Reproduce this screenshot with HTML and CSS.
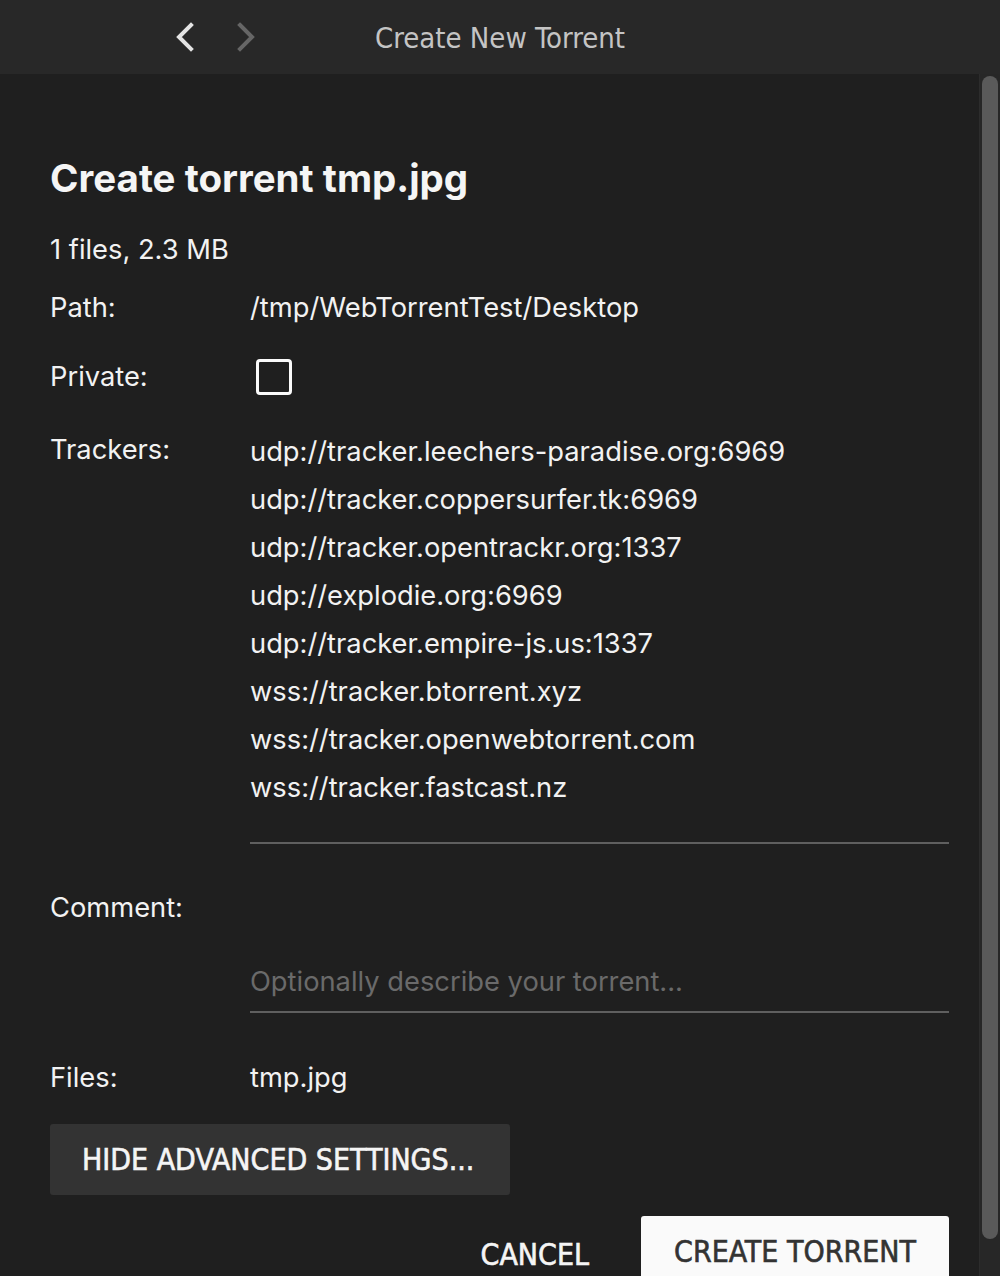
FILE: index.html
```html
<!DOCTYPE html>
<html>
<head>
<meta charset="utf-8">
<title>Create New Torrent</title>
<link rel="stylesheet" href="styles.css">
</head>
<body>
<header class="topbar">
  <nav class="nav">
    <svg class="chev chev-back" width="22" height="30" viewBox="0 0 22 30"><path d="M17 3 L5 15 L17 27" fill="none" stroke="currentColor" stroke-width="4" stroke-linecap="square"/></svg>
    <svg class="chev chev-fwd" width="22" height="30" viewBox="0 0 22 30"><path d="M5 3 L17 15 L5 27" fill="none" stroke="currentColor" stroke-width="4" stroke-linecap="square"/></svg>
  </nav>
  <div class="title">Create New Torrent</div>
  <div></div>
</header>
<main class="main">
  <section class="content">
    <h1 class="heading">Create torrent tmp.jpg</h1>
    <div class="summary">1 files, 2.3 MB</div>
    <div class="row row-path">
      <div class="label">Path:</div>
      <div class="value">/tmp/WebTorrentTest/Desktop</div>
    </div>
    <div class="row row-private">
      <div class="label">Private:</div>
      <div class="value"><span class="checkbox"></span></div>
    </div>
    <div class="row row-trackers">
      <div class="label">Trackers:</div>
      <div class="value trackers">
        <div>udp://tracker.leechers-paradise.org:6969</div>
        <div>udp://tracker.coppersurfer.tk:6969</div>
        <div>udp://tracker.opentrackr.org:1337</div>
        <div>udp://explodie.org:6969</div>
        <div>udp://tracker.empire-js.us:1337</div>
        <div>wss://tracker.btorrent.xyz</div>
        <div>wss://tracker.openwebtorrent.com</div>
        <div>wss://tracker.fastcast.nz</div>
      </div>
    </div>
    <div class="row row-comment">
      <div class="label">Comment:</div>
      <div class="value comment"><span class="placeholder">Optionally describe your torrent...</span></div>
    </div>
    <div class="row row-files">
      <div class="label">Files:</div>
      <div class="value">tmp.jpg</div>
    </div>
    <button class="btn btn-advanced">HIDE ADVANCED SETTINGS...</button>
    <div class="actions">
      <button class="btn btn-cancel">CANCEL</button>
      <button class="btn btn-create">CREATE TORRENT</button>
    </div>
  </section>
  <div class="scrollbar"><div class="thumb"></div></div>
</main>
</body>
</html>
```
FILE: styles.css
```css
html, body {
  margin: 0;
  padding: 0;
  background: #1f1f1f;
  height: 1276px;
  overflow: hidden;
}
body {
  font-family: "Inter", "Noto Sans", sans-serif;
  color: #f2f2f2;
}
.topbar {
  height: 74px;
  background: #282828;
  display: grid;
  grid-template-columns: 1fr auto 1fr;
  align-items: center;
}
.nav {
  display: flex;
  align-items: center;
  gap: 39px;
  padding-left: 174px;
}
.chev { display: block; }
.chev-back { color: #e4e4e4; }
.chev-fwd { color: #666; }
.title {
  font-family: "Liberation Sans Narrow", "DejaVu Sans Condensed", sans-serif;
  font-size: 29px;
  color: #c4c4c4;
  padding-top: 2px;
}
.main {
  display: flex;
  height: 1202px;
  overflow: hidden;
}
.content {
  flex: 1;
  padding: 80px 30px 0 50px;
}
.scrollbar {
  width: 16px;
  padding: 2px 2px 0 2px;
  background: #272727;
  border-left: 1px solid #2c2c2c;
}
.thumb {
  height: 1163px;
  background: #5a5a5a;
  border-radius: 8px;
}
.heading {
  margin: 0;
  font-size: 38.5px;
  line-height: 48px;
  font-weight: 700;
  color: #f5f5f5;
}
.summary {
  margin-top: 28px;
  font-size: 27.3px;
  line-height: 40px;
}
.row {
  display: flex;
  font-size: 27.3px;
}
.label {
  width: 200px;
  flex: none;
  line-height: 40px;
}
.value {
  flex: 1;
  line-height: 40px;
}
.row-path { margin-top: 18px; }
.row-private {
  margin-top: 25px;
  height: 48px;
  align-items: center;
}
.checkbox {
  display: block;
  width: 30px;
  height: 30px;
  margin-left: 6px;
  border: 3px solid #fafafa;
  border-radius: 4px;
}
.row-trackers { margin-top: 27px; }
.row-trackers .label { line-height: 44px; }
.trackers {
  line-height: 48px;
  padding-bottom: 30px;
  border-bottom: 2px solid #5f5f5f;
}
.row-comment { margin-top: 44px; }
.comment {
  padding-top: 74px;
  padding-bottom: 9px;
  border-bottom: 2px solid #5f5f5f;
}
.placeholder { color: #6a6a6a; }
.row-files { margin-top: 45px; }
.btn {
  font-family: "Liberation Sans Narrow", "DejaVu Sans Condensed", sans-serif;
  font-size: 30px;
  border: none;
  cursor: pointer;
  -webkit-text-stroke: 0.6px currentColor;
}
.btn-advanced {
  display: block;
  margin-top: 26px;
  width: 460px;
  height: 71px;
  padding: 0 0 0 32px;
  text-align: left;
  background: #333333;
  color: #f5f5f5;
  border-radius: 3px;
}
.actions {
  margin-top: 21px;
  display: flex;
  justify-content: flex-end;
  align-items: flex-start;
}
.btn-cancel {
  background: transparent;
  color: #f5f5f5;
  height: 71px;
  padding: 6px 52px 0 0;
}
.btn-create {
  width: 308px;
  height: 71px;
  background: #fafafa;
  color: #333;
  border-radius: 3px;
}
```
